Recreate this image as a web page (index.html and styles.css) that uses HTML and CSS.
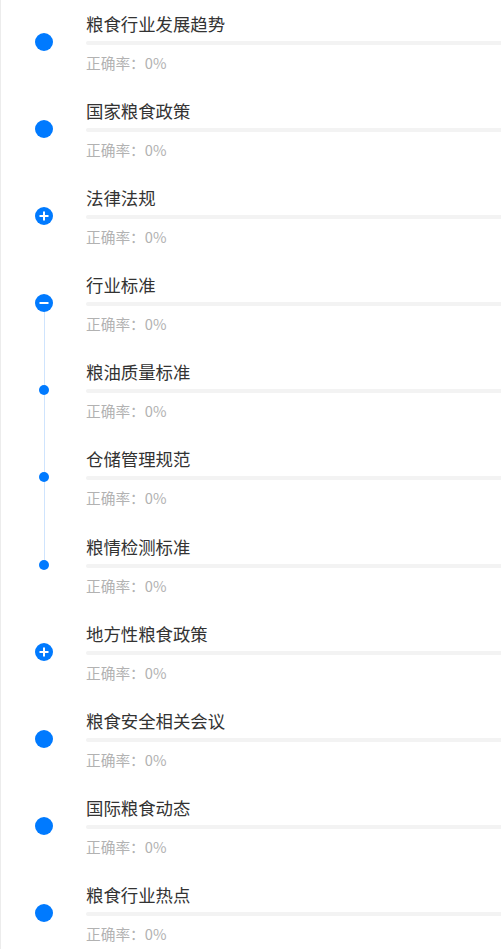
FILE: index.html
```html
<!DOCTYPE html>
<html lang="zh-CN">
  <head>
    <meta charset="UTF-8" />
    <meta name="viewport" content="width=device-width, initial-scale=1.0" />
    <title>知识点</title>
    <link rel="stylesheet" href="styles.css">
  </head>
  <body>
    <div class="tree">
      <div class="node">
        <div class="marker"><span class="dot"></span></div>
        <div class="info">
          <div class="title">粮食行业发展趋势</div>
          <div class="bar"></div>
          <div class="rate">正确率：0%</div>
        </div>
      </div>

      <div class="node">
        <div class="marker"><span class="dot"></span></div>
        <div class="info">
          <div class="title">国家粮食政策</div>
          <div class="bar"></div>
          <div class="rate">正确率：0%</div>
        </div>
      </div>

      <div class="node">
        <div class="marker">
          <svg class="toggle" viewBox="0 0 18 18">
            <circle cx="9" cy="9" r="9" fill="#007aff" />
            <path d="M4.5 9h9M9 4.5v9" stroke="#fff" stroke-width="2" />
          </svg>
        </div>
        <div class="info">
          <div class="title">法律法规</div>
          <div class="bar"></div>
          <div class="rate">正确率：0%</div>
        </div>
      </div>

      <div class="node open">
        <div class="marker">
          <svg class="toggle" viewBox="0 0 18 18">
            <circle cx="9" cy="9" r="9" fill="#007aff" />
            <path d="M4.5 9h9" stroke="#fff" stroke-width="2" />
          </svg>
        </div>
        <div class="info">
          <div class="title">行业标准</div>
          <div class="bar"></div>
          <div class="rate">正确率：0%</div>
        </div>
      </div>

      <div class="node child">
        <div class="marker"><span class="dot small"></span></div>
        <div class="info">
          <div class="title">粮油质量标准</div>
          <div class="bar"></div>
          <div class="rate">正确率：0%</div>
        </div>
      </div>

      <div class="node child">
        <div class="marker"><span class="dot small"></span></div>
        <div class="info">
          <div class="title">仓储管理规范</div>
          <div class="bar"></div>
          <div class="rate">正确率：0%</div>
        </div>
      </div>

      <div class="node child last">
        <div class="marker"><span class="dot small"></span></div>
        <div class="info">
          <div class="title">粮情检测标准</div>
          <div class="bar"></div>
          <div class="rate">正确率：0%</div>
        </div>
      </div>

      <div class="node">
        <div class="marker">
          <svg class="toggle" viewBox="0 0 18 18">
            <circle cx="9" cy="9" r="9" fill="#007aff" />
            <path d="M4.5 9h9M9 4.5v9" stroke="#fff" stroke-width="2" />
          </svg>
        </div>
        <div class="info">
          <div class="title">地方性粮食政策</div>
          <div class="bar"></div>
          <div class="rate">正确率：0%</div>
        </div>
      </div>

      <div class="node">
        <div class="marker"><span class="dot"></span></div>
        <div class="info">
          <div class="title">粮食安全相关会议</div>
          <div class="bar"></div>
          <div class="rate">正确率：0%</div>
        </div>
      </div>

      <div class="node">
        <div class="marker"><span class="dot"></span></div>
        <div class="info">
          <div class="title">国际粮食动态</div>
          <div class="bar"></div>
          <div class="rate">正确率：0%</div>
        </div>
      </div>

      <div class="node">
        <div class="marker"><span class="dot"></span></div>
        <div class="info">
          <div class="title">粮食行业热点</div>
          <div class="bar"></div>
          <div class="rate">正确率：0%</div>
        </div>
      </div>
    </div>
  </body>
</html>
```

FILE: styles.css
```css
body {
  margin: 0;
  padding: 0;
  background-color: #fff;
  font-family: "Noto Sans CJK SC", "Noto Sans", sans-serif;
  overflow: hidden;
}

.tree {
  border-left: 1px solid #ececec;
  min-height: 100vh;
}

.node {
  display: grid;
  grid-template-columns: 85px 1fr;
  height: 87.1px;
}

.marker {
  position: relative;
  display: flex;
  justify-content: center;
  align-items: flex-start;
  width: 18px;
  margin-left: 34px;
  padding-top: 33px;
}

.dot {
  display: block;
  width: 18px;
  height: 18px;
  border-radius: 50%;
  background-color: #007aff;
  position: relative;
  z-index: 1;
}

.dot.small {
  width: 10px;
  height: 10px;
  margin-top: 4px;
}

.toggle {
  display: block;
  width: 18px;
  height: 18px;
  position: relative;
  z-index: 1;
}

/* connector line for the opened branch */
.open .marker::before,
.child .marker::before {
  content: "";
  position: absolute;
  left: 9px;
  width: 1px;
  background-color: #cfe4fd;
}

.open .marker::before {
  top: 42px;
  bottom: 0;
}

.child .marker::before {
  top: 0;
  bottom: 0;
}

.child.last .marker::before {
  bottom: auto;
  height: 42px;
}

.info {
  padding-top: 12px;
}

.title {
  font-size: 17.4px;
  line-height: 24px;
  color: #333;
}

.bar {
  height: 4px;
  margin-top: 5px;
  background-color: #f3f3f3;
  border-radius: 2px 0 0 2px;
}

.rate {
  margin-top: 8px;
  font-size: 14.7px;
  line-height: 20px;
  color: #b2b2b2;
}
```
